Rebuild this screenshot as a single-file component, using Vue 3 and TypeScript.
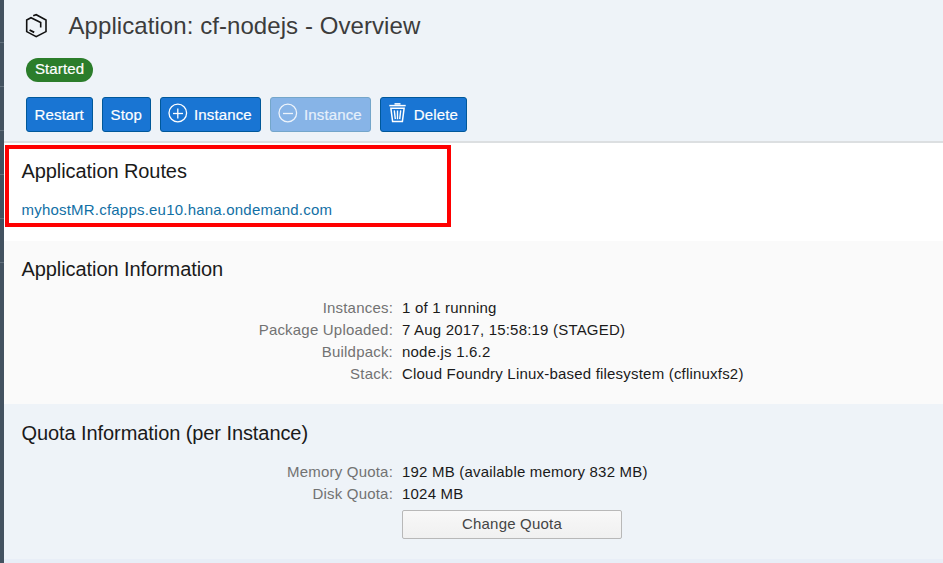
<script setup lang="ts">
interface Field {
  label: string
  value: string
}

type Icon = 'add' | 'less' | 'delete'

interface Action {
  label: string
  icon?: Icon
  disabled?: boolean
}

const actions: Action[] = [
  { label: 'Restart' },
  { label: 'Stop' },
  { label: 'Instance', icon: 'add' },
  { label: 'Instance', icon: 'less', disabled: true },
  { label: 'Delete', icon: 'delete' },
]

const info: Field[] = [
  { label: 'Instances:', value: '1 of 1 running' },
  { label: 'Package Uploaded:', value: '7 Aug 2017, 15:58:19 (STAGED)' },
  { label: 'Buildpack:', value: 'node.js 1.6.2' },
  { label: 'Stack:', value: 'Cloud Foundry Linux-based filesystem (cflinuxfs2)' },
]

const quota: Field[] = [
  { label: 'Memory Quota:', value: '192 MB (available memory 832 MB)' },
  { label: 'Disk Quota:', value: '1024 MB' },
]
</script>

<template>
  <div class="shell">
    <nav class="rail">
      <span v-for="n in 6" :key="n" class="rail-item"></span>
    </nav>
    <main class="page">
      <header class="header">
        <div class="title-row">
          <svg class="app-icon" width="24" height="26" viewBox="0 0 24 26" fill="none" stroke="#111" stroke-width="1.6">
            <path d="M9.2 2.8 L12.2 1.7 L22 7 V18.6 L12.2 23.7 L2.7 18.6 V7 L7 4.7 L16.7 9.6 V14.6" />
            <path d="M5.6 17 L10.2 19.3" stroke-width="1.9" />
          </svg>
          <h1 class="title">Application: cf-nodejs - Overview</h1>
        </div>
        <span class="status">Started</span>
        <div class="actions">
          <button
            v-for="(action, i) in actions"
            :key="i"
            class="action"
            :disabled="action.disabled"
          >
            <svg v-if="action.icon === 'delete'" class="icon trash" width="18" height="20" viewBox="0 0 18 20" fill="none" stroke="#fff">
              <path d="M5.5 0.9 H11.5" stroke-width="1.6" />
              <path d="M0.3 2.6 H16.7" stroke-width="1.5" />
              <path d="M1.9 5.3 H15.1 L13.4 18.4 H3.6 Z" stroke-width="1.5" />
              <path d="M5.3 7.4 L6.3 16.2 M8.5 7.4 V16.2 M11.7 7.4 L10.7 16.2" stroke-width="1.4" />
            </svg>
            <svg v-else-if="action.icon" class="icon" width="20" height="20" viewBox="0 0 20 20" fill="none" stroke="#fff" stroke-width="1.3">
              <circle cx="9.8" cy="10" r="8.8" />
              <path d="M5 10.5 H15" />
              <path v-if="action.icon === 'add'" d="M9.8 5.5 V15.5" />
            </svg>
            <span>{{ action.label }}</span>
          </button>
        </div>
      </header>

      <section class="section routes">
        <h2 class="heading">Application Routes</h2>
        <a class="route">myhostMR.cfapps.eu10.hana.ondemand.com</a>
        <div class="highlight"></div>
      </section>

      <section class="section info">
        <h2 class="heading">Application Information</h2>
        <dl class="fields">
          <template v-for="field in info" :key="field.label">
            <dt>{{ field.label }}</dt>
            <dd>{{ field.value }}</dd>
          </template>
        </dl>
      </section>

      <section class="section quota">
        <h2 class="heading">Quota Information (per Instance)</h2>
        <dl class="fields">
          <template v-for="field in quota" :key="field.label">
            <dt>{{ field.label }}</dt>
            <dd>{{ field.value }}</dd>
          </template>
        </dl>
        <button class="change">Change Quota</button>
      </section>
    </main>
  </div>
</template>

<style>
body {
  overflow: hidden;
}
</style>

<style scoped>
.shell {
  display: flex;
  height: 563px;
  overflow: hidden;
  font-family: "Liberation Sans", Arial, sans-serif;
  font-size: 15px;
  color: #1a1a1a;
}
.rail {
  width: 4px;
  flex: none;
  background: #435260;
}
.rail-item {
  display: block;
  box-sizing: border-box;
  height: 44px;
  border-bottom: 1px solid #62707c;
}
.rail-item:first-child {
  height: 43px;
}
.page {
  flex: 1;
  background: #e8eef7;
}
.header {
  box-sizing: border-box;
  height: 143px;
  padding: 12px 22px 0;
  background: #eef3f8;
  border-bottom: 2px solid #dcdfe1;
}
.title-row {
  display: flex;
  align-items: center;
  height: 28px;
}
.app-icon {
  flex: none;
  margin-left: -2px;
}
.title {
  margin: 0 0 0 20.5px;
  font-size: 24px;
  line-height: 28px;
  font-weight: 400;
  letter-spacing: 0.07px;
  color: #3c3c3c;
  white-space: nowrap;
}
.status {
  display: block;
  box-sizing: border-box;
  width: 67px;
  height: 24px;
  margin-top: 18px;
  border-radius: 12px;
  background: #2b7d2b;
  color: #fff;
  line-height: 22px;
  text-align: center;
  letter-spacing: 0.12px;
  -webkit-text-stroke: 0.2px #fff;
}
.actions {
  display: flex;
  gap: 9px;
  margin-top: 15px;
}
.action {
  display: flex;
  align-items: center;
  box-sizing: border-box;
  height: 35px;
  padding: 0 7.6px;
  border: 1px solid #00589a;
  border-radius: 3px;
  background: #1975d3;
  color: #fff;
  font: inherit;
  letter-spacing: 0.13px;
  white-space: nowrap;
  -webkit-text-stroke: 0.2px #fff;
}
.action:nth-child(1) {
  width: 67px;
}
.action:nth-child(2) {
  width: 49px;
}
.action:nth-child(3),
.action:nth-child(4) {
  width: 101px;
}
.action:nth-child(5) {
  width: 87px;
}
.action:disabled {
  border-color: #74a6ca;
  background: #87b4e7;
  color: #e6f0fb;
  -webkit-text-stroke-color: #e6f0fb;
}
.action:disabled .icon {
  opacity: 0.85;
}
.icon {
  flex: none;
  margin: -3px 6px 0 -0.6px;
}
.trash {
  margin: -3px 6.8px 0 0.4px;
}
.section {
  box-sizing: border-box;
  padding: 16px 18px 0;
}
.routes {
  position: relative;
  height: 98px;
  background: #fff;
}
.info {
  height: 163px;
  background: #fafafa;
}
.quota {
  height: 155px;
  padding-top: 17px;
  background: #eef3f8;
}
.heading {
  margin: 0 0 0 -0.5px;
  font-size: 20px;
  line-height: 24px;
  font-weight: 400;
  letter-spacing: -0.08px;
}
.route {
  display: inline-block;
  margin-top: 16px;
  margin-left: -0.5px;
  line-height: 22px;
  letter-spacing: 0.21px;
  color: #116fa5;
}
.highlight {
  position: absolute;
  left: 1px;
  top: 2px;
  box-sizing: border-box;
  width: 446px;
  height: 82px;
  border: 4px solid #f00;
}
.fields {
  display: grid;
  grid-template-columns: 371px 1fr;
  column-gap: 9px;
  margin: 16px 0 0;
  line-height: 22px;
  letter-spacing: 0.2px;
  white-space: nowrap;
}
.fields dt {
  text-align: right;
  color: #727272;
}
.fields dd {
  margin: 0;
}
.change {
  display: block;
  box-sizing: border-box;
  width: 220px;
  height: 29px;
  margin: 5px 0 0 380px;
  padding: 0 0 2px;
  border: 1px solid #b8b8b8;
  border-radius: 2px;
  background: linear-gradient(#f8f8f8, #f0f0f0);
  color: #454545;
  font: inherit;
  letter-spacing: 0.2px;
}
</style>
